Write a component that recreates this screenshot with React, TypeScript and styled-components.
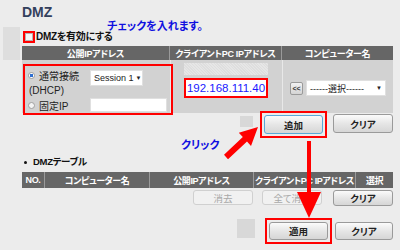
import styled, { createGlobalStyle } from 'styled-components';

const GlobalStyle = createGlobalStyle`
  body {
    margin: 0;
    background: #ececec;
    font-family: "Liberation Sans", "Noto Sans CJK JP", sans-serif;
    font-feature-settings: "palt";
    color: #111;
  }
`;

const table1 = ['公開IPアドレス', 'クライアントPC IPアドレス', 'コンピューター名'];
const table2 = [
  { label: 'NO.', w: 23 },
  { label: 'コンピューター名', w: 105 },
  { label: '公開IPアドレス', w: 104 },
  { label: 'クライアントPC IPアドレス', w: 102 },
  { label: '選択', w: 37 },
];

export default function App() {
  return (
    <Page>
      <GlobalStyle />
      <Gutter />
      <Content>
        <Title>DMZ</Title>
        <EnableRow>
          <CheckMark>
            <CheckBox />
          </CheckMark>
          <EnableLabel>DMZを有効にする</EnableLabel>
        </EnableRow>

        <Grid>
          {table1.map((h) => (
            <HeadCell key={h}>{h}</HeadCell>
          ))}
          <WanCell>
            <RadioLine>
              <Radio $on />
              <span>通常接続</span>
            </RadioLine>
            <Select $w={53}>
              <span>Session 1</span>
              <Caret>▼</Caret>
            </Select>
            <SubLabel>(DHCP)</SubLabel>
            <RadioLine>
              <Radio />
              <span>固定IP</span>
            </RadioLine>
            <TextBox />
          </WanCell>
          <ClientCell>
            <Hatched />
            <IpBox>192.168.111.40</IpBox>
          </ClientCell>
          <NameCell>
            <SmallBtn>&lt;&lt;</SmallBtn>
            <Select $w={80}>
              <span>------選択------</span>
              <Caret>▼</Caret>
            </Select>
          </NameCell>
        </Grid>

        <ActionRow>
          <Square $w={13} $h={11} $top={5} $gap={7} />
          <Mark $gap={6}>
            <Button $focus $w={59} $h={19}>追加</Button>
          </Mark>
          <Button $w={60} $h={19} $top={3}>クリア</Button>
        </ActionRow>

        <Section>
          <Bullet />
          DMZテーブル
        </Section>

        <Head2>
          {table2.map((c) => (
            <HeadCell2 key={c.label} $w={c.w}>{c.label}</HeadCell2>
          ))}
        </Head2>

        <ListButtons>
          <Button $off $w={60} $h={15} $gap={9}>消去</Button>
          <Button $off $w={60} $h={15} $gap={11}>全て消去</Button>
          <Button $w={60} $h={16}>クリア</Button>
        </ListButtons>

        <ApplyRow>
          <Square $w={18} $h={19} $top={1} $gap={10} />
          <Mark $gap={3}>
            <Button $w={59} $h={18}>適用</Button>
          </Mark>
          <Button $w={58} $h={18} $top={4}>クリア</Button>
        </ApplyRow>
      </Content>

      <Note $x={107} $y={20}>チェックを入れます。</Note>
      <Note $x={181} $y={139}>クリック</Note>

      <Arrows width="400" height="250" viewBox="0 0 400 250">
        <polygon
          fill="#ff0000"
          points="258,127 251,146 247,141.5 228,159.2 224,154.8 242.8,137.1 238.8,132.7"
        />
        <rect x="307" y="141" width="4" height="52" fill="#ff0000" />
        <polygon fill="#ff0000" points="297,192 321,192 309,218" />
      </Arrows>
    </Page>
  );
}

const Page = styled.div`
  position: relative;
  width: 400px;
  height: 250px;
  overflow: hidden;
  display: flex;
  align-items: flex-start;
`;

const Gutter = styled.div`
  margin: 27px 0 0 3px;
  width: 17px;
  height: 33px;
  background: #dedede;
`;

const Content = styled.div`
  margin-left: 2px;
  width: 371px;
  padding-top: 4px;
  display: flex;
  flex-direction: column;
`;

const Title = styled.div`
  height: 16px;
  line-height: 16px;
  font-size: 14px;
  font-weight: 700;
  color: #33405c;
`;

const EnableRow = styled.div`
  margin-top: 11px;
  height: 11px;
  display: flex;
  align-items: center;
  gap: 1px;
`;

const CheckMark = styled.div`
  box-sizing: border-box;
  width: 12px;
  height: 12px;
  margin-left: 1px;
  border: 2px solid #ff0000;
  display: flex;
  align-items: center;
  justify-content: center;
  background: #ececec;
`;

const CheckBox = styled.div`
  box-sizing: border-box;
  width: 8px;
  height: 8px;
  border: 1px solid #b4b4b4;
  background: #f6f6f6;
`;

const EnableLabel = styled.span`
  font-size: 10px;
  font-weight: 700;
  line-height: 11px;
  letter-spacing: -0.3px;
`;

const Grid = styled.div`
  margin-top: 4px;
  display: grid;
  grid-template-columns: 148px 112px 111px;
  grid-template-rows: 14px 53px;
  background: #d2d2d2;
`;

const HeadCell = styled.div`
  background: #666666;
  color: #fff;
  font-size: 9px;
  font-weight: 700;
  letter-spacing: -0.3px;
  white-space: nowrap;
  display: flex;
  align-items: center;
  justify-content: center;
  border-right: 1px solid #9a9a9a;
  &:nth-child(3) {
    border-right: none;
  }
`;

const WanCell = styled.div`
  box-sizing: border-box;
  width: 150px;
  margin: 4px 0 -2px 1px;
  border: 2px solid #ff0000;
  padding: 1px 2px 0 3px;
  display: grid;
  grid-template-columns: 62px 77px;
  grid-template-rows: 16px 14px 16px;
  align-items: center;
  font-size: 10px;
  color: #222;
  position: relative;
  z-index: 1;
  & > :nth-child(2) {
    grid-row: span 2;
    align-self: start;
    margin-top: 3px;
  }
`;

const RadioLine = styled.div`
  display: flex;
  align-items: center;
  gap: 4px;
`;

const Radio = styled.span<{ $on?: boolean }>`
  box-sizing: border-box;
  width: 7px;
  height: 7px;
  border-radius: 50%;
  border: 1px solid #a0a0a0;
  background: ${(p) => (p.$on ? 'radial-gradient(circle, #2f6fd0 0 1.6px, #fff 2px)' : '#f4f4f4')};
`;

const SubLabel = styled.span`
  padding-left: 1px;
  grid-column: 1;
`;

const Select = styled.div<{ $w: number }>`
  box-sizing: border-box;
  width: ${(p) => p.$w}px;
  height: 16px;
  background: #fff;
  border: 1px solid #e0e0e0;
  padding: 0 3px;
  display: flex;
  align-items: center;
  justify-content: space-between;
  gap: 2px;
  font-size: 9px;
  white-space: nowrap;
  color: #222;
`;

const Caret = styled.span`
  font-size: 6px;
  color: #222;
`;

const TextBox = styled.div`
  box-sizing: border-box;
  width: 77px;
  height: 14px;
  background: #fff;
  border: 1px solid #e0e0e0;
`;

const ClientCell = styled.div`
  border-left: 1px solid #e8e8e8;
  padding: 3px 0 0 13px;
  display: flex;
  flex-direction: column;
  gap: 3px;
`;

const Hatched = styled.div`
  width: 84px;
  height: 12px;
  background: repeating-linear-gradient(45deg, #e6e6e6 0 1px, #dedede 1px 2px);
`;

const IpBox = styled.div`
  box-sizing: border-box;
  width: 84px;
  height: 20px;
  border: 2px solid #ff0000;
  background: #fff;
  color: #1a1aff;
  font-size: 11.5px;
  display: flex;
  align-items: center;
  justify-content: center;
`;

const NameCell = styled.div`
  border-left: 1px solid #e8e8e8;
  padding: 20px 0 0 7px;
  display: flex;
  align-items: flex-start;
  gap: 3px;
`;

const SmallBtn = styled.div`
  box-sizing: border-box;
  width: 13px;
  height: 13px;
  margin-top: 2px;
  border: 1px solid #9a9a9a;
  border-radius: 2px;
  background: linear-gradient(#f2f2f2, #d4d4d4);
  font-size: 7px;
  font-weight: 700;
  color: #333;
  display: flex;
  align-items: center;
  justify-content: center;
`;

const ActionRow = styled.div`
  height: 24px;
  display: flex;
  justify-content: flex-end;
  align-items: flex-start;
  margin-top: -2px;
`;

const Square = styled.div<{ $w: number; $h: number; $top: number; $gap?: number }>`
  width: ${(p) => p.$w}px;
  height: ${(p) => p.$h}px;
  margin: ${(p) => p.$top}px ${(p) => p.$gap ?? 11}px 0 0;
  background: #d8d8d8;
`;

const Mark = styled.div<{ $gap: number }>`
  margin-right: ${(p) => p.$gap}px;
  border: 2px solid #ff0000;
  padding: 2px;
  display: flex;
`;

const Button = styled.div<{
  $w: number;
  $h: number;
  $top?: number;
  $gap?: number;
  $focus?: boolean;
  $off?: boolean;
}>`
  box-sizing: border-box;
  width: ${(p) => p.$w}px;
  height: ${(p) => p.$h}px;
  margin: ${(p) => p.$top ?? 0}px ${(p) => p.$gap ?? 0}px 0 0;
  border: 1px solid ${(p) => (p.$focus ? '#58a8d8' : p.$off ? '#d0d0d0' : '#9a9a9a')};
  border-radius: 3px;
  background: ${(p) => (p.$off ? '#f1f1f1' : 'linear-gradient(#fbfbfb, #e6e6e6 50%, #d6d6d6)')};
  color: ${(p) => (p.$off ? '#a8a8a8' : '#222')};
  font-size: 9.5px;
  font-weight: ${(p) => (p.$off ? 400 : 700)};
  display: flex;
  align-items: center;
  justify-content: center;
`;

const Section = styled.div`
  margin-top: 22px;
  height: 10px;
  line-height: 10px;
  font-size: 9.5px;
  font-weight: 700;
  letter-spacing: -0.3px;
  display: flex;
  align-items: center;
  padding-left: 2px;
  gap: 6px;
`;

const Bullet = styled.span`
  width: 3px;
  height: 3px;
  border-radius: 50%;
  background: #111;
`;

const Head2 = styled.div`
  margin-top: 5px;
  height: 16px;
  display: flex;
  background: #666666;
`;

const HeadCell2 = styled.div<{ $w: number }>`
  box-sizing: border-box;
  width: ${(p) => p.$w}px;
  border-right: 1px solid #9a9a9a;
  color: #fff;
  font-size: 9px;
  font-weight: 700;
  letter-spacing: -0.4px;
  white-space: nowrap;
  overflow: hidden;
  display: flex;
  align-items: center;
  justify-content: center;
  &:last-child {
    border-right: none;
  }
`;

const ListButtons = styled.div`
  margin-top: 2px;
  display: flex;
  justify-content: flex-end;
  align-items: flex-start;
`;

const ApplyRow = styled.div`
  margin-top: 12px;
  display: flex;
  justify-content: flex-end;
  align-items: flex-start;
`;

const Note = styled.div<{ $x: number; $y: number }>`
  position: absolute;
  left: ${(p) => p.$x}px;
  top: ${(p) => p.$y}px;
  color: #1010e0;
  font-size: 11px;
  font-weight: 700;
  line-height: 12px;
`;

const Arrows = styled.svg`
  position: absolute;
  left: 0;
  top: 0;
  pointer-events: none;
`;
